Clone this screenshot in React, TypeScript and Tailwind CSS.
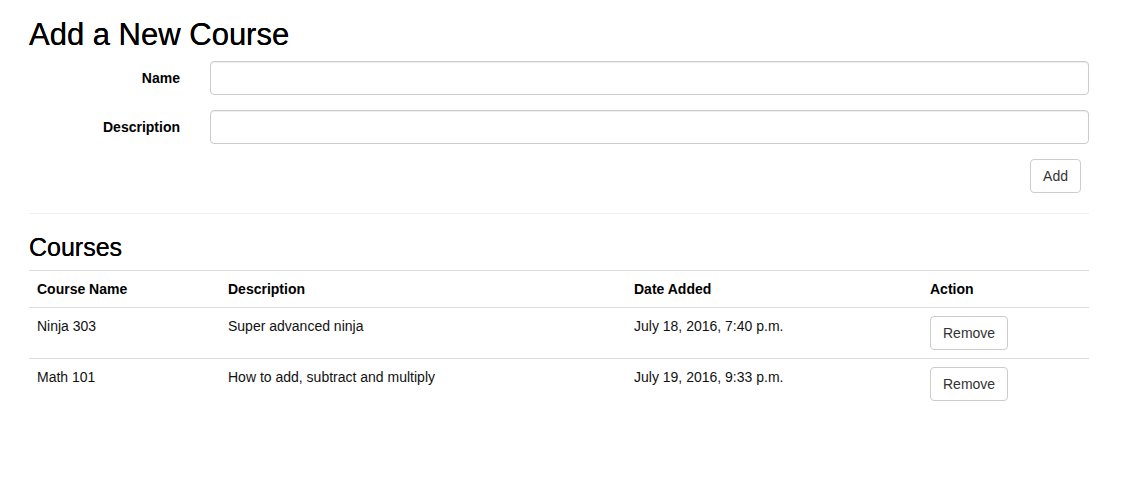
import React from 'react'

const courses = [
  { name: 'Ninja 303', description: 'Super advanced ninja', added: 'July 18, 2016, 7:40 p.m.' },
  { name: 'Math 101', description: 'How to add, subtract and multiply', added: 'July 19, 2016, 9:33 p.m.' },
]

export default function App() {
  return (
    <div className="min-h-[486px] bg-white px-[29px] text-[14px] leading-5 text-[#111]" style={{ fontFamily: '"Liberation Sans", Arial, sans-serif' }}>
      <div className="w-[1060px]">
        <h2 className="pt-[18px] pb-[10px] text-[31px] leading-[33px] font-medium text-black [text-shadow:0_0_0.4px_#000]">Add a New Course</h2>

        {/* 폼 */}
        <form className="flex flex-col gap-[15px]" onSubmit={(e) => e.preventDefault()}>
          <div className="flex items-start">
            <label className="w-[151px] pt-[7px] text-right font-bold text-black">Name</label>
            <input className="ml-[30px] h-[34px] flex-1 rounded-[4px] border border-[#ccc] px-3 shadow-[inset_0_1px_1px_rgba(0,0,0,0.075)] outline-none" />
          </div>
          <div className="flex items-start">
            <label className="w-[151px] pt-[7px] text-right font-bold text-black">Description</label>
            <input className="ml-[30px] h-[34px] flex-1 rounded-[4px] border border-[#ccc] px-3 shadow-[inset_0_1px_1px_rgba(0,0,0,0.075)] outline-none" />
          </div>
          <div className="flex justify-end pr-2">
            <button className="h-[34px] rounded-[4px] border border-[#ccc] bg-white px-3 text-[#333]">Add</button>
          </div>
        </form>

        <hr className="mt-[20px] border-t border-[#eee]" />

        <h3 className="pt-5 pb-[10px] text-[25px] leading-[26px] font-medium text-black [text-shadow:0_0_0.4px_#000]">Courses</h3>

        {/* 목록 */}
        <table className="w-full border-collapse text-left">
          <thead>
            <tr className="border-t border-[#ddd]">
              <th className="w-[191px] p-2 font-bold text-black">Course Name</th>
              <th className="w-[406px] p-2 font-bold text-black">Description</th>
              <th className="w-[296px] p-2 font-bold text-black">Date Added</th>
              <th className="p-2 font-bold text-black">Action</th>
            </tr>
          </thead>
          <tbody>
            {courses.map((c) => (
              <tr key={c.name} className="border-t border-[#ddd]">
                <td className="p-2 align-top">{c.name}</td>
                <td className="p-2 align-top">{c.description}</td>
                <td className="p-2 align-top">{c.added}</td>
                <td className="p-2 align-top">
                  <button className="h-[34px] rounded-[4px] border border-[#ccc] bg-white px-3 text-[#333]">Remove</button>
                </td>
              </tr>
            ))}
          </tbody>
        </table>
      </div>
    </div>
  )
}
